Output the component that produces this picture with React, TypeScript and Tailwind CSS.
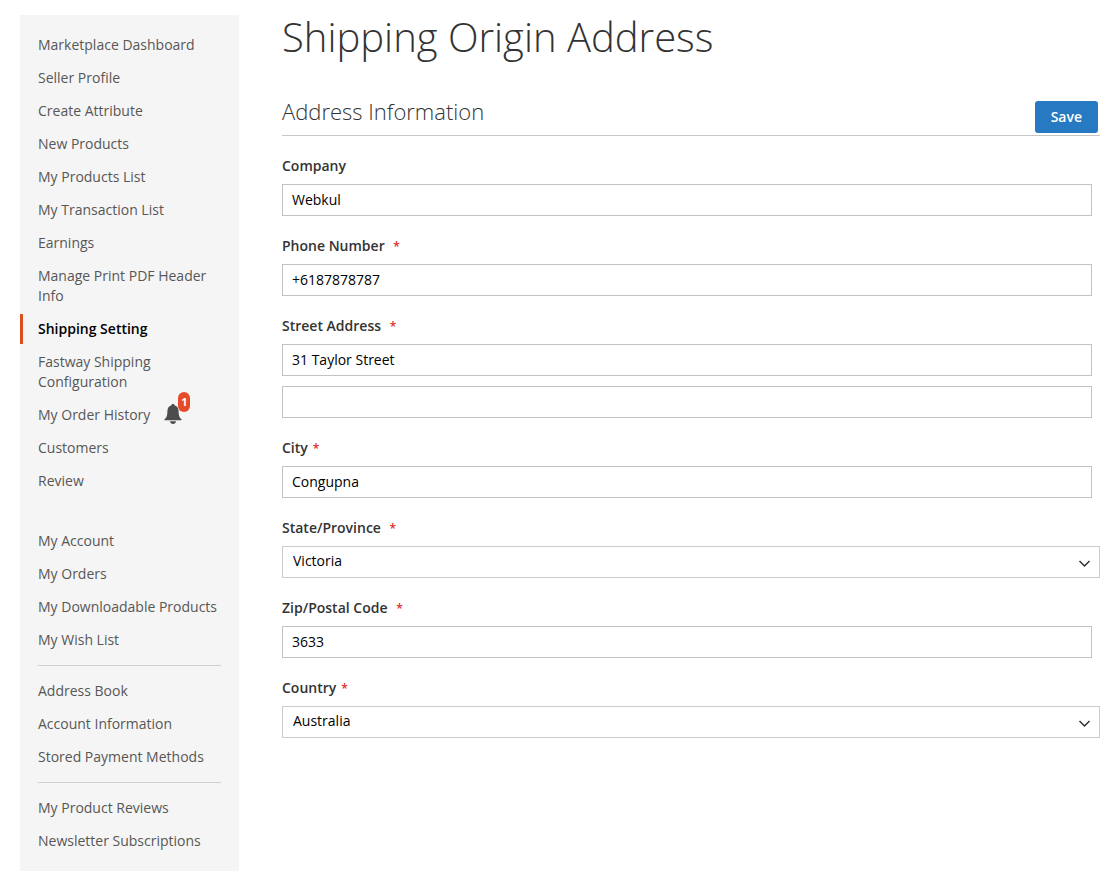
import React from "react";

type NavItem = { label: string; active?: boolean; alerts?: number };

const sellerLinks: NavItem[] = [
  { label: "Marketplace Dashboard" },
  { label: "Seller Profile" },
  { label: "Create Attribute" },
  { label: "New Products" },
  { label: "My Products List" },
  { label: "My Transaction List" },
  { label: "Earnings" },
  { label: "Manage Print PDF Header Info" },
  { label: "Shipping Setting", active: true },
  { label: "Fastway Shipping Configuration" },
  { label: "My Order History", alerts: 1 },
  { label: "Customers" },
  { label: "Review" },
];

const accountGroups: NavItem[][] = [
  [
    { label: "My Account" },
    { label: "My Orders" },
    { label: "My Downloadable Products" },
    { label: "My Wish List" },
  ],
  [
    { label: "Address Book" },
    { label: "Account Information" },
    { label: "Stored Payment Methods" },
  ],
  [{ label: "My Product Reviews" }, { label: "Newsletter Subscriptions" }],
];

function Bell({ count }: { count: number }) {
  return (
    <span className="relative mb-0.5 ml-3.5 inline-block h-5 w-[18px]">
      <svg viewBox="0 0 18 20" className="block h-5 w-[18px]" fill="#4d4d4d" aria-hidden="true">
        <path d="M9 0C8 0 7.3.6 7.2 1.5 4.6 2.300 3.400 4.400 3.400 7.200c0 4.300-.7 6.500-3 8.300V16.300h17.200v-.8c-2.300-1.800-3-4-3-8.300 0-2.800-1.200-4.900-3.800-5.700C10.700.6 10 0 9 0z" />
        <path d="M6 17.300h6C11.800 19 10.600 20 9 20s-2.800-1-3-2.700z" />
      </svg>
      <span className="absolute -top-3 left-3.5 flex h-5 w-3 items-center justify-center rounded-md bg-[#e64a26] text-[11px] font-bold text-white">
        {count}
      </span>
    </span>
  );
}

function NavList({ items }: { items: NavItem[] }) {
  return (
    <ul className="flex flex-col gap-[3px]">
      {items.map((item) => (
        <li key={item.label}>
          <a
            href="#"
            aria-current={item.active ? "page" : undefined}
            className={
              item.active
                ? "block border-l-3 border-[#d9501e] py-[5px] pr-[18px] pl-[15px] font-semibold text-black"
                : "block border-l-3 border-transparent py-[5px] pr-[18px] pl-[15px] text-[#575757]"
            }
          >
            {item.alerts ? (
              <span className="flex h-5 items-center">
                {item.label}
                <Bell count={item.alerts} />
              </span>
            ) : (
              item.label
            )}
          </a>
        </li>
      ))}
    </ul>
  );
}

type FieldProps = {
  id: string;
  label: string;
  required?: boolean;
  spaced?: boolean;
  children: React.ReactNode;
};

function Field({ id, label, required, spaced, children }: FieldProps) {
  return (
    <div className="flex flex-col gap-2">
      <label htmlFor={id} className="block font-semibold text-[#333]">
        {label}
        {required && (
          <>
            {spaced && " "}
            <span className="ml-[5px] text-xs leading-none text-[#e02b27]">*</span>
          </>
        )}
      </label>
      {children}
    </div>
  );
}

function TextInput({ id, value, label }: { id: string; value: string; label?: string }) {
  return (
    <div className="pr-2">
      <input
        id={id}
        type="text"
        defaultValue={value}
        aria-label={label}
        className="block h-8 w-full border border-[#c2c2c2] bg-white px-[9px] pb-0.5 text-black outline-none"
      />
    </div>
  );
}

function Select({ id, options }: { id: string; options: string[] }) {
  return (
    <div className="relative">
      <select
        id={id}
        className="block h-8 w-full appearance-none border border-[#ccc] bg-white px-2.5 pb-0.5 text-black outline-none"
      >
        {options.map((o) => (
          <option key={o}>{o}</option>
        ))}
      </select>
      <svg
        viewBox="0 0 12 8"
        className="pointer-events-none absolute top-3.5 right-2.5 h-2 w-3"
        fill="none"
        stroke="#303030"
        strokeWidth="1.500"
        aria-hidden="true"
      >
        <path d="M1.500 1l5 5 5-5" />
      </svg>
    </div>
  );
}

export default function App() {
  return (
    <div className="flex min-h-screen items-start bg-white px-5 pt-[15px] pb-2 font-['Open_Sans',sans-serif] text-sm leading-5">
      <nav aria-label="Account" className="w-[219px] shrink-0 bg-[#f5f5f5] py-[15px]">
        <NavList items={sellerLinks} />
        <div className="mt-[30px]">
          {accountGroups.map((group, i) => (
            <React.Fragment key={group[0].label}>
              {i > 0 && <hr className="mx-[18px] my-2.5 border-[#d1d1d1]" />}
              <NavList items={group} />
            </React.Fragment>
          ))}
        </div>
      </nav>

      <main className="ml-[43px] min-w-0 flex-1">
        <h1 className="text-[40px] leading-[44px] font-light text-[#333]">Shipping Origin Address</h1>
        <form onSubmit={(e) => e.preventDefault()}>
          <div className="mt-[42px] flex h-[35px] items-start justify-between border-b border-[#c6c6c6] pr-0.5">
            <h2 className="-mt-1 text-[22px] leading-7 font-light text-[#333]">Address Information</h2>
            <button
              type="submit"
              className="h-8 rounded-[3px] bg-[#2779c2] px-4 font-semibold text-white"
            >
              Save
            </button>
          </div>
          <div className="mt-5 flex flex-col gap-5">
            <Field id="company" label="Company">
              <TextInput id="company" value="Webkul" />
            </Field>
            <Field id="phone" label="Phone Number" required spaced>
              <TextInput id="phone" value="+6187878787" />
            </Field>
            <Field id="street" label="Street Address" required spaced>
              <div className="flex flex-col gap-2.5">
                <TextInput id="street" value="31 Taylor Street" />
                <TextInput id="street2" value="" label="Street Address 2" />
              </div>
            </Field>
            <Field id="city" label="City" required>
              <TextInput id="city" value="Congupna" />
            </Field>
            <Field id="state" label="State/Province" required spaced>
              <Select id="state" options={["Victoria"]} />
            </Field>
            <Field id="zip" label="Zip/Postal Code" required spaced>
              <TextInput id="zip" value="3633" />
            </Field>
            <Field id="country" label="Country" required>
              <Select id="country" options={["Australia"]} />
            </Field>
          </div>
        </form>
      </main>
    </div>
  );
}
